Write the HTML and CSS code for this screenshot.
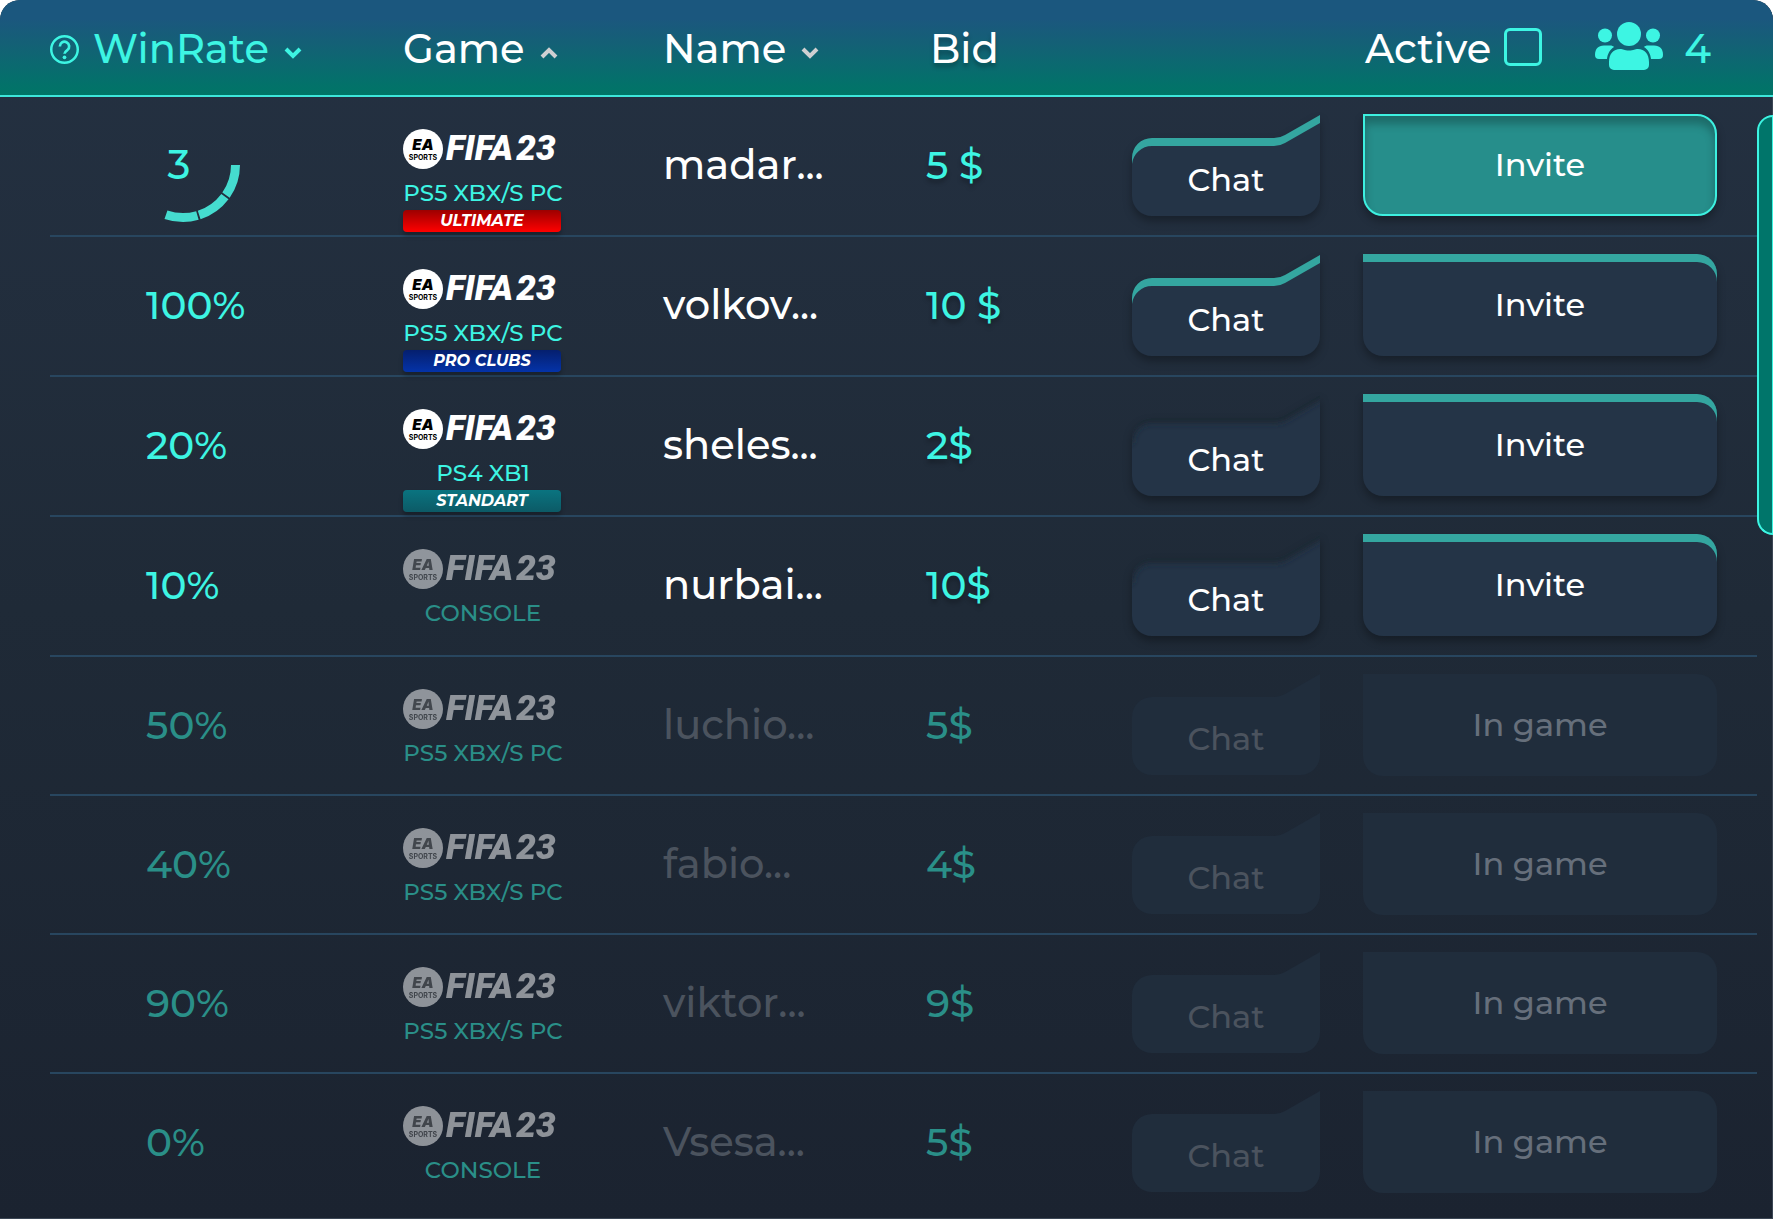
FILE: index.html
```html
<!DOCTYPE html>
<html lang="en">
<head>
  <meta charset="UTF-8">
  <meta name="viewport" content="width=device-width, initial-scale=1.0">
  <title>Players</title>
  <link rel="stylesheet" href="styles.css">
</head>
<body>
  <!-- Shared shapes -->
  <svg class="defs" width="0" height="0" aria-hidden="true">
    <defs>
      <clipPath id="chatClip">
        <path d="M0 43A20 20 0 0 1 20 23H142Q148 23 153 20L188 0V81A20 20 0 0 1 168 101H20A20 20 0 0 1 0 81Z"/>
      </clipPath>
      <filter id="soft" x="-10%" y="-20%" width="120%" height="140%">
        <feGaussianBlur stdDeviation="3"/>
      </filter>
    </defs>
    <symbol id="chat" viewBox="0 0 188 101">
      <path d="M0 43A20 20 0 0 1 20 23H142Q148 23 153 20L188 0V81A20 20 0 0 1 168 101H20A20 20 0 0 1 0 81Z"/>
    </symbol>
    <symbol id="chatNew" viewBox="0 0 188 101">
      <use href="#chat"/>
      <path fill="#34a6a0" d="M0 43A20 20 0 0 1 20 23H142Q148 23 153 20L188 0V8L153 28Q148 31 142 31H20A20 20 0 0 0 0 49Z"/>
    </symbol>
    <symbol id="chatRead" viewBox="0 0 188 101">
      <use href="#chat"/>
      <g clip-path="url(#chatClip)">
        <path filter="url(#soft)" fill="none" stroke="#1a2531" stroke-width="8" d="M-3 48A22 22 0 0 1 20 24H142Q148 24 153 21L194 -3"/>
      </g>
    </symbol>
    <symbol id="chevron" viewBox="0 0 20 14">
      <path d="M3 3l7 7 7-7" fill="none" stroke="currentColor" stroke-width="4"/>
    </symbol>
  </svg>

  <div class="card">
    <table>
      <thead>
        <tr>
          <th class="sorted">
            <button type="button" class="sort">
              <svg class="help" viewBox="0 0 28 28"><circle cx="14" cy="14" r="12.800" fill="none" stroke="currentColor" stroke-width="2.400"/><path d="M9.500 11a4.500 4.500 0 1 1 7.300 3.500c-1.800 1.300-2.800 2-2.800 3.700" fill="none" stroke="currentColor" stroke-width="2.600"/><circle cx="14" cy="21.500" r="1.800" fill="currentColor"/></svg>
              WinRate
              <svg class="chevron"><use href="#chevron"/></svg>
            </button>
          </th>
          <th><button type="button" class="sort">Game <svg class="chevron up"><use href="#chevron"/></svg></button></th>
          <th><button type="button" class="sort">Name <svg class="chevron"><use href="#chevron"/></svg></button></th>
          <th class="bid-head">Bid</th>
          <th></th>
          <th class="filters">
            <label for="active">Active <input type="checkbox" id="active"></label>
            <span class="online">
              <svg class="people" viewBox="0 0 68 48" fill="currentColor">
                <circle cx="34" cy="12" r="12"/>
                <circle cx="10" cy="13.500" r="7"/>
                <circle cx="58" cy="13.500" r="7"/>
                <path d="M12 37H4a4 4 0 0 1-4-4c0-6 3-9.500 9-9.500h6c2 0 3 .5 4 1.500-4 2.500-6.500 7-7 12Z"/>
                <path d="M56 37h8a4 4 0 0 0 4-4c0-6-3-9.500-9-9.500h-6c-2 0-3 .5-4 1.500 4 2.500 6.500 7 7 12Z"/>
                <path d="M19 48a5 5 0 0 1-5-5v-3c0-8 4.500-13 11-13 3.500 0 4 1.500 9 1.500s5.500-1.500 9-1.500c6.500 0 11 5 11 13v3a5 5 0 0 1-5 5Z"/>
              </svg>
              4
            </span>
          </th>
        </tr>
      </thead>
      <tbody>
        <tr>
          <td>
            <div class="timer">
              <svg viewBox="0 0 114 114" fill="none" stroke="#45dccf" stroke-width="9">
                <circle cx="57" cy="57" r="52.500" pathLength="360" stroke-dasharray="35 2 35 2 35 251"/>
              </svg>
              <span>3</span>
            </div>
          </td>
          <td class="game">
            <div class="logo"><div class="ea"><b>EA</b><small>SPORTS</small></div>FIFA<span>23</span></div>
            <p>PS5 XBX/S PC</p>
            <div class="badge ultimate">ULTIMATE</div>
          </td>
          <td>madar...</td>
          <td class="bid">5 $</td>
          <td><button type="button" class="chat"><svg><use href="#chatNew"/></svg><span>Chat</span></button></td>
          <td><button type="button" class="invite selected">Invite</button></td>
        </tr>
        <tr>
          <td class="rate">100%</td>
          <td class="game">
            <div class="logo"><div class="ea"><b>EA</b><small>SPORTS</small></div>FIFA<span>23</span></div>
            <p>PS5 XBX/S PC</p>
            <div class="badge clubs">PRO CLUBS</div>
          </td>
          <td>volkov...</td>
          <td class="bid">10 $</td>
          <td><button type="button" class="chat"><svg><use href="#chatNew"/></svg><span>Chat</span></button></td>
          <td><button type="button" class="invite">Invite</button></td>
        </tr>
        <tr>
          <td class="rate">20%</td>
          <td class="game">
            <div class="logo"><div class="ea"><b>EA</b><small>SPORTS</small></div>FIFA<span>23</span></div>
            <p>PS4 XB1</p>
            <div class="badge standart">STANDART</div>
          </td>
          <td>sheles...</td>
          <td class="bid">2$</td>
          <td><button type="button" class="chat"><svg><use href="#chatRead"/></svg><span>Chat</span></button></td>
          <td><button type="button" class="invite">Invite</button></td>
        </tr>
        <tr>
          <td class="rate">10%</td>
          <td class="game off">
            <div class="logo"><div class="ea"><b>EA</b><small>SPORTS</small></div>FIFA<span>23</span></div>
            <p>CONSOLE</p>
          </td>
          <td>nurbai...</td>
          <td class="bid">10$</td>
          <td><button type="button" class="chat"><svg><use href="#chatRead"/></svg><span>Chat</span></button></td>
          <td><button type="button" class="invite">Invite</button></td>
        </tr>
        <tr class="busy">
          <td class="rate">50%</td>
          <td class="game off">
            <div class="logo"><div class="ea"><b>EA</b><small>SPORTS</small></div>FIFA<span>23</span></div>
            <p>PS5 XBX/S PC</p>
          </td>
          <td>luchio...</td>
          <td class="bid">5$</td>
          <td><button type="button" class="chat" disabled><svg><use href="#chat"/></svg><span>Chat</span></button></td>
          <td><button type="button" class="invite" disabled>In game</button></td>
        </tr>
        <tr class="busy">
          <td class="rate">40%</td>
          <td class="game off">
            <div class="logo"><div class="ea"><b>EA</b><small>SPORTS</small></div>FIFA<span>23</span></div>
            <p>PS5 XBX/S PC</p>
          </td>
          <td>fabio...</td>
          <td class="bid">4$</td>
          <td><button type="button" class="chat" disabled><svg><use href="#chat"/></svg><span>Chat</span></button></td>
          <td><button type="button" class="invite" disabled>In game</button></td>
        </tr>
        <tr class="busy">
          <td class="rate">90%</td>
          <td class="game off">
            <div class="logo"><div class="ea"><b>EA</b><small>SPORTS</small></div>FIFA<span>23</span></div>
            <p>PS5 XBX/S PC</p>
          </td>
          <td>viktor...</td>
          <td class="bid">9$</td>
          <td><button type="button" class="chat" disabled><svg><use href="#chat"/></svg><span>Chat</span></button></td>
          <td><button type="button" class="invite" disabled>In game</button></td>
        </tr>
        <tr class="busy">
          <td class="rate">0%</td>
          <td class="game off">
            <div class="logo"><div class="ea"><b>EA</b><small>SPORTS</small></div>FIFA<span>23</span></div>
            <p>CONSOLE</p>
          </td>
          <td>Vsesa...</td>
          <td class="bid">5$</td>
          <td><button type="button" class="chat" disabled><svg><use href="#chat"/></svg><span>Chat</span></button></td>
          <td><button type="button" class="invite" disabled>In game</button></td>
        </tr>
      </tbody>
    </table>
    <div class="scrollbar"></div>
  </div>
</body>
</html>
```
FILE: styles.css
```css
* {
  box-sizing: border-box;
}

body {
  margin: 0;
  background: #fff;
  font-family: Montserrat, Inter, sans-serif;
  color: #fff;
}

.defs {
  position: absolute;
}

.card {
  position: relative;
  min-height: 100vh;
  border-radius: 20px 20px 0 0;
  overflow: hidden;
  background: linear-gradient(#243142, #1f2a37 50%, #1b2330);
  box-shadow: inset -1px -1px #3b4654;
}

table {
  display: block;
  font-size: 40px;
  line-height: 48px;
}

thead, tbody {
  display: block;
}

tr {
  display: grid;
  grid-template-columns: 353fr 260fr 263fr 206fr 231fr 354fr;
  align-items: center;
  padding: 0 56px 0 50px;
}

th, td {
  padding: 0;
  font-weight: 500;
  text-align: left;
  white-space: nowrap;
}

button {
  padding: 0;
  border: none;
  background: none;
  font: inherit;
  color: inherit;
  cursor: pointer;
}

/* Header */
thead tr {
  height: 97px;
  padding-top: 3px;
  border-bottom: 2px solid #3de6da;
  background: linear-gradient(#1b577e 20%, #136175 48%, #04706b 85%, #007566);
}

.sort {
  display: flex;
  align-items: center;
  gap: 14px;
}

.sorted {
  color: #3df5e3;
}

.help {
  width: 29px;
  height: 29px;
}

.chevron {
  width: 20px;
  height: 14px;
  margin-top: 8px;
  color: #cfcfd2;
}

.sorted .chevron {
  color: #3df5e3;
}

.up {
  transform: rotate(180deg);
}

.bid-head {
  padding-left: 4px;
  text-shadow: 0 4px 4px rgba(0, 0, 0, 0.25);
}

.filters {
  display: flex;
  align-items: center;
  justify-content: space-between;
  padding: 0 6px 0 2px;
}

.filters label {
  display: flex;
  align-items: center;
  gap: 13px;
}

.filters input {
  appearance: none;
  width: 38px;
  height: 38px;
  margin: 0 0 4px;
  border: 3px solid #3df5e3;
  border-radius: 6px;
}

.online {
  display: flex;
  align-items: center;
  gap: 21px;
  color: #3df5e3;
}

.people {
  width: 68px;
  height: 48px;
  margin-bottom: 6px;
}

/* Rows */
tbody tr {
  height: 140px;
  padding-bottom: 4px;
  background: linear-gradient(#28465f, #28465f) no-repeat 50px 100% / calc(100% - 66px) 2px;
}

tbody .busy {
  height: 139px;
  color: #4b535e;
}

tbody tr:last-child {
  background: none;
}

.rate, .bid {
  font-size: 39px;
  color: #3df5e3;
}

.rate {
  padding-left: 96px;
}

.bid {
  text-shadow: 0 4px 4px rgba(0, 0, 0, 0.25);
}

.busy .rate, .busy .bid {
  color: #2a8f88;
  text-shadow: none;
}

.timer {
  display: grid;
  place-items: center;
  width: 114px;
  margin-left: 76px;
  color: #3df5e3;
}

.timer svg, .timer span {
  grid-area: 1 / 1;
}

.timer svg {
  width: 114px;
  height: 114px;
}

.timer span {
  padding-right: 8px;
}

/* Game */
.game {
  align-self: start;
  width: 160px;
  padding-top: 32px;
}

.logo {
  display: flex;
  align-items: center;
  height: 40px;
  font: italic 900 35px/40px Roboto, sans-serif;
  color: #fff;
}

.ea {
  display: flex;
  flex-direction: column;
  align-items: center;
  justify-content: center;
  width: 40px;
  height: 40px;
  margin-right: 3px;
  border-radius: 50%;
  background: #fff;
  color: #000;
}

.ea b {
  font: italic 900 15px/18px Inter, sans-serif;
}

.ea small {
  font: 700 7px/8px Inter, sans-serif;
}

.logo span {
  margin-left: 3px;
}

.off .logo {
  opacity: 0.5;
}

.off .ea {
  color: #666;
}

.game p {
  margin: 10px 0 3px;
  font-size: 23px;
  font-weight: 500;
  line-height: 28px;
  text-align: center;
  color: #3df5e3;
}

.game.off p {
  color: #2a8f88;
}

.game .badge {
  width: 158px;
  border-radius: 4px;
  font-size: 16px;
  font-style: italic;
  font-weight: 700;
  line-height: 22px;
  text-align: center;
  box-shadow: 0 4px 4px rgba(0, 0, 0, 0.25);
}

.ultimate {
  background: linear-gradient(#9c0000, #ff0000);
}

.clubs {
  background: linear-gradient(#051f6e, #0433a8);
}

.standart {
  background: linear-gradient(#0a7480, #0c5a66);
}

/* Buttons */
.chat {
  display: grid;
  width: 188px;
  font-size: 32px;
  fill: #243447;
}

.chat svg, .chat span {
  grid-area: 1 / 1;
}

.chat svg {
  width: 188px;
  height: 101px;
  overflow: visible;
  filter: drop-shadow(0 5px 4px rgba(0, 0, 0, 0.3));
}

.chat span {
  z-index: 1;
  padding-top: 41px;
}

.chat:disabled {
  fill: #202d3c;
}

.chat:disabled svg {
  filter: none;
}

.invite {
  display: block;
  width: 100%;
  height: 102px;
  border-radius: 0 20px 20px 20px;
  background: #243447;
  font-size: 32px;
  box-shadow: inset 0 8px #34a6a0, 0 5px 8px rgba(0, 0, 0, 0.3);
}

.selected {
  border: 2px solid #3df0e0;
  background: #268e8b;
  box-shadow: inset 0 8px 8px rgba(0, 0, 0, 0.25), 0 5px 8px rgba(0, 0, 0, 0.3);
}

.invite:disabled {
  background: #202d3c;
  color: #666f7b;
  box-shadow: none;
}

.scrollbar {
  position: absolute;
  top: 115px;
  right: 0;
  width: 16px;
  height: 420px;
  border: 2px solid #3df5e3;
  border-right-width: 1px;
  border-radius: 16px 0 0 16px;
  background: #00756a;
}
```
